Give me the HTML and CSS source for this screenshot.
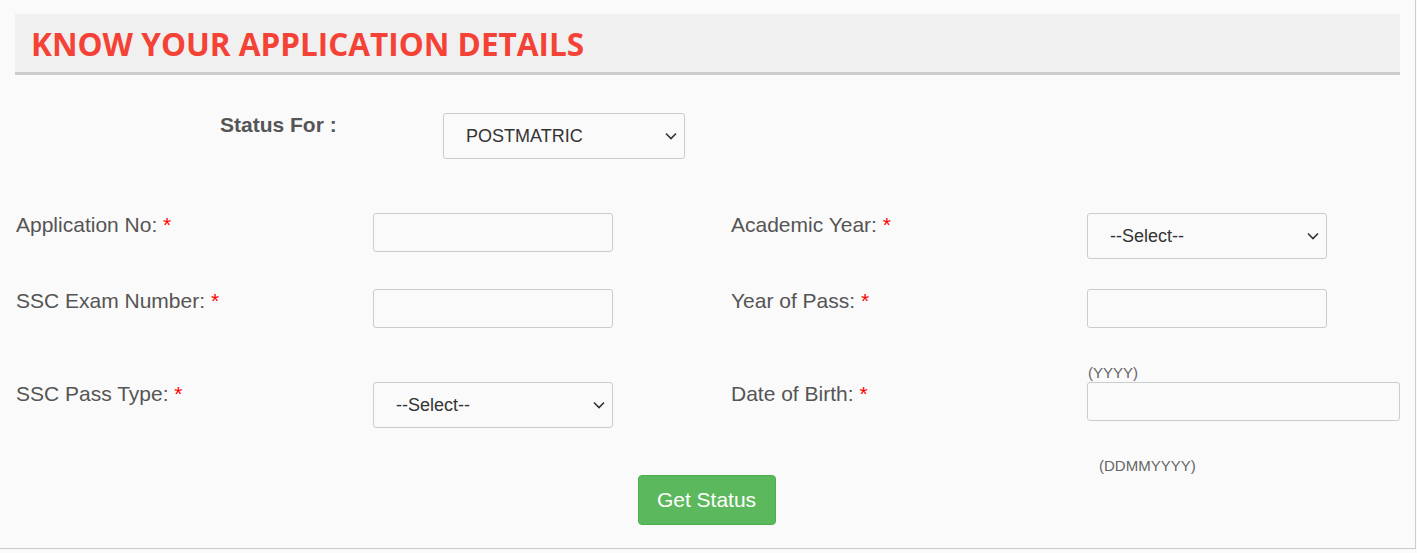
FILE: index.html
```html
<!DOCTYPE html>
<html>
<head>
<meta charset="utf-8">
<link rel="stylesheet" href="styles.css">
</head>
<body>
<div class="panel">
  <div class="header"><h1 class="title">KNOW YOUR APPLICATION DETAILS</h1></div>

  <div class="status-row">
    <label class="status-label">Status For :</label>
    <div class="select-wrap status-select">
      <select class="ctl sel"><option>POSTMATRIC</option></select>
    </div>
  </div>

  <div class="form-grid">
    <div class="lbl">Application No: <span class="req">*</span></div>
    <div class="cell"><input class="ctl inp" type="text"></div>
    <div class="lbl">Academic Year: <span class="req">*</span></div>
    <div class="cell"><select class="ctl sel"><option>--Select--</option></select></div>

    <div class="lbl">SSC Exam Number: <span class="req">*</span></div>
    <div class="cell"><input class="ctl inp" type="text"></div>
    <div class="lbl">Year of Pass: <span class="req">*</span></div>
    <div class="cell"><input class="ctl inp" type="text"><div class="hint">(YYYY)</div></div>

    <div class="lbl">SSC Pass Type: <span class="req">*</span></div>
    <div class="cell"><select class="ctl sel"><option>--Select--</option></select></div>
    <div class="lbl">Date of Birth: <span class="req">*</span></div>
    <div class="cell"><input class="ctl inp wide" type="text"><div class="hint hint-dob">(DDMMYYYY)</div></div>
  </div>

  <div class="actions"><button class="btn">Get Status</button></div>
</div>
</body>
</html>
```

FILE: styles.css
```css
html, body {
  margin: 0;
  padding: 0;
  background: #fafafa;
}
body {
  font-family: "Liberation Sans", Arial, sans-serif;
  color: #555;
}
.panel {
  box-sizing: border-box;
  width: 1416px;
  height: 549px;
  border-right: 1px solid #ccc;
  border-bottom: 1px solid #ccc;
  padding-top: 14px;
}
.header {
  margin-left: 15px;
  width: 1385px;
  height: 58px;
  background: #f0f0f0;
  border-bottom: 3px solid #ccc;
  box-sizing: content-box;
}
.title {
  margin: 0;
  padding-left: 16px;
  font-family: "Open Sans", sans-serif;
  font-weight: 700;
  font-size: 31.5px;
  line-height: 60px;
  color: #f44336;
}
.status-row {
  display: flex;
  align-items: flex-start;
  margin-top: 38px;
  padding-left: 220px;
}
.status-label {
  width: 223px;
  font-weight: 700;
  font-size: 21px;
  line-height: 24px;
  color: #555;
}
.status-select .sel {
  width: 242px;
}
.ctl {
  box-sizing: border-box;
  display: block;
  width: 240px;
  background-color: #fafafa;
  border: 1px solid #ccc;
  border-radius: 3px;
  margin: 0;
  font-family: "Liberation Sans", Arial, sans-serif;
  color: #333;
}
.inp {
  height: 39px;
}
.inp.wide {
  width: 313px;
}
.sel {
  -webkit-appearance: none;
  appearance: none;
  height: 46px;
  padding: 0 30px 0 22px;
  font-size: 18px;
  background-image: url("data:image/svg+xml;utf8,<svg xmlns='http://www.w3.org/2000/svg' width='12' height='8' viewBox='0 0 12 8'><path d='M1 1.5 L6 6.5 L11 1.5' fill='none' stroke='%23333' stroke-width='1.6'/></svg>");
  background-repeat: no-repeat;
  background-position: right 7px center;
  background-size: 12px 8px;
}
.form-grid {
  display: grid;
  grid-template-columns: 357px 358px 356px 313px;
  row-gap: 30px;
  margin-top: 54px;
  padding-left: 16px;
  align-items: start;
}
.form-grid > :nth-child(n+5):nth-child(-n+8) {
  margin-bottom: -29px;
}
.lbl {
  font-size: 21px;
  line-height: 24px;
  color: #555;
}
.req {
  color: #f00;
}
.hint {
  font-size: 15px;
  line-height: 17px;
  color: #666;
  margin-top: 36px;
  margin-left: 1px;
}
.hint-dob {
  margin-top: 36px;
  margin-left: 12px;
}
.actions {
  display: flex;
  justify-content: center;
  margin-top: 1px;
}
.btn {
  width: 138px;
  height: 50px;
  margin-left: -2px;
  background: #5cb85c;
  border: 1px solid #4cae4c;
  border-radius: 4px;
  color: #fff;
  font-family: "Liberation Sans", Arial, sans-serif;
  font-size: 21px;
}
```
